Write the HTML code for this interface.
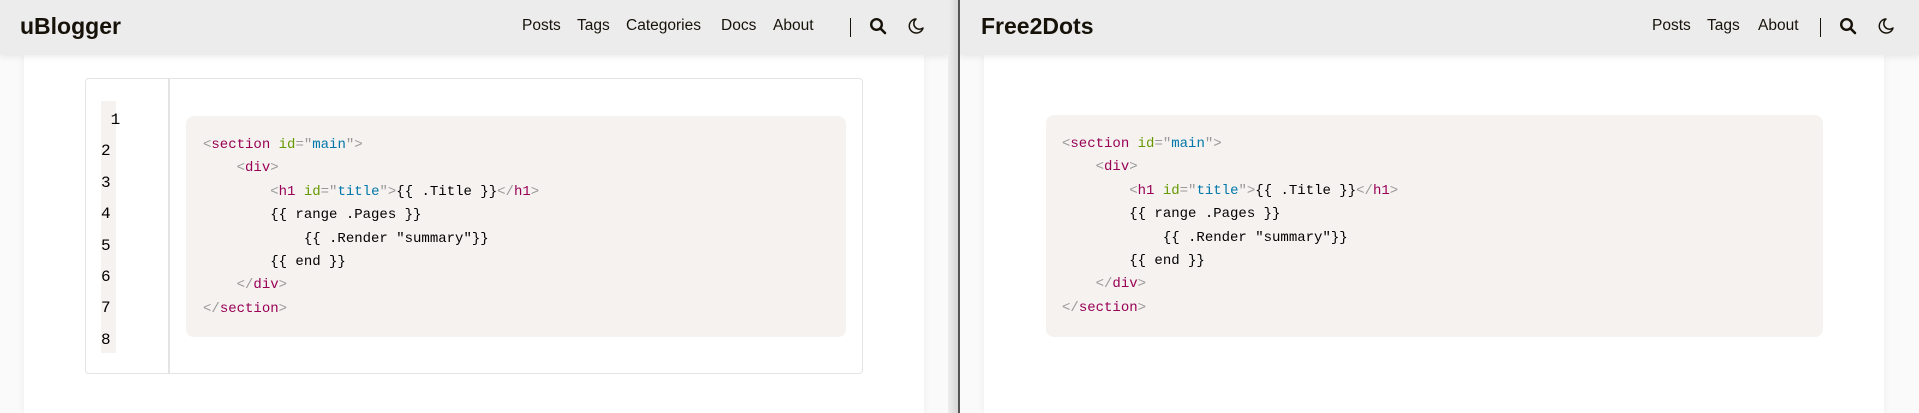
<!DOCTYPE html>
<html><head><meta charset="utf-8"><style>
*{margin:0;padding:0;box-sizing:border-box}
body{width:1919px;height:413px;overflow:hidden;background:#fafafa;font-family:"Liberation Sans",sans-serif;position:relative}
.pane{position:absolute;top:0;height:413px;overflow:hidden}
.hdr{position:absolute;top:0;left:0;height:55px;background:#ececec;box-shadow:0 2px 6px rgba(0,0,0,.08)}
.logo{position:absolute;top:13px;font-weight:bold;font-size:23px;color:#161209}
.nav{position:absolute;top:17px;font-size:15.5px;color:#161209}
.card{position:absolute;top:55px;height:358px;background:#fff;box-shadow:0 0 8px rgba(0,0,0,.06)}
.code{position:absolute;background:#f5f2f0;border-radius:8px;font-family:"Liberation Mono",monospace;font-size:14px;line-height:23.4px;color:#000;white-space:pre;padding-top:18px}
.t{color:#905}.a{color:#690}.v{color:#07a}.p{color:#999}
</style></head><body>
<div class="pane" style="left:0;width:958px">
 <div class="card" style="left:24px;width:900px"></div>
 <div class="hdr" style="width:948px"></div>
 <div class="logo" style="left:20px">uBlogger</div>
 <div class="nav" style="left:522px">Posts</div>
 <div class="nav" style="left:577px">Tags</div>
 <div class="nav" style="left:626px">Categories</div>
 <div class="nav" style="left:721px">Docs</div>
 <div class="nav" style="left:773px">About</div>
 <div style="position:absolute;left:850px;top:18px;width:1px;height:19px;background:#161209"></div>
 <svg style="position:absolute;left:869px;top:17px" width="18" height="18" viewBox="0 0 18 18"><circle cx="7.5" cy="7.5" r="5.3" fill="none" stroke="#161209" stroke-width="2.4"/><path d="M11.5 11.5L16 16" stroke="#161209" stroke-width="2.6" stroke-linecap="round"/></svg>
 <svg style="position:absolute;left:907px;top:17px" width="18" height="18" viewBox="0 0 18 18"><path d="M9 2A7 7 0 1 0 16 11A5.5 5.5 0 0 1 9 2Z" fill="none" stroke="#161209" stroke-width="1.5" stroke-linejoin="round"/></svg>
 <div style="position:absolute;left:85px;top:78px;width:778px;height:296px;border:1px solid #e4e4e4;border-radius:4px"></div>
 <div style="position:absolute;left:168px;top:79px;width:2px;height:294px;background:#e4e4e4"></div>
 <div style="position:absolute;left:101px;top:101px;width:15px;height:252px;background:#f5f2f0"></div>
 <div style="position:absolute;left:101px;top:105px;font-family:'Liberation Mono',monospace;font-size:16px;line-height:31.4px;color:#000;white-space:pre"> 1
2
3
4
5
6
7
8</div>
 <div class="code" style="left:186px;top:116px;width:660px;height:221px;padding-left:17px"><span class="p">&lt;</span><span class="t">section</span> <span class="a">id</span><span class="p">="</span><span class="v">main</span><span class="p">"&gt;</span>
    <span class="p">&lt;</span><span class="t">div</span><span class="p">&gt;</span>
        <span class="p">&lt;</span><span class="t">h1</span> <span class="a">id</span><span class="p">="</span><span class="v">title</span><span class="p">"&gt;</span>{{ .Title }}<span class="p">&lt;/</span><span class="t">h1</span><span class="p">&gt;</span>
        {{ range .Pages }}
            {{ .Render "summary"}}
        {{ end }}
    <span class="p">&lt;/</span><span class="t">div</span><span class="p">&gt;</span>
<span class="p">&lt;/</span><span class="t">section</span><span class="p">&gt;</span></div>
</div>
<div style="position:absolute;left:948px;top:0;width:10px;height:413px;background:linear-gradient(90deg,#eee,#d6d6d6)"></div>
<div style="position:absolute;left:958px;top:0;width:2px;height:413px;background:#555"></div>
<div class="pane" style="left:960px;width:959px">
 <div class="card" style="left:24px;width:900px"></div>
 <div class="hdr" style="width:959px"></div>
 <div class="logo" style="left:21px">Free2Dots</div>
 <div class="nav" style="left:692px">Posts</div>
 <div class="nav" style="left:747px">Tags</div>
 <div class="nav" style="left:798px">About</div>
 <div style="position:absolute;left:860px;top:18px;width:1px;height:19px;background:#161209"></div>
 <svg style="position:absolute;left:879px;top:17px" width="18" height="18" viewBox="0 0 18 18"><circle cx="7.5" cy="7.5" r="5.3" fill="none" stroke="#161209" stroke-width="2.4"/><path d="M11.5 11.5L16 16" stroke="#161209" stroke-width="2.6" stroke-linecap="round"/></svg>
 <div style="position:absolute;left:917px;top:17px"><svg width="18" height="18" viewBox="0 0 18 18"><path d="M9 2A7 7 0 1 0 16 11A5.5 5.5 0 0 1 9 2Z" fill="none" stroke="#161209" stroke-width="1.5" stroke-linejoin="round"/></svg></div>
 <div class="code" style="left:86px;top:115px;width:777px;height:222px;padding-left:16px"><span class="p">&lt;</span><span class="t">section</span> <span class="a">id</span><span class="p">="</span><span class="v">main</span><span class="p">"&gt;</span>
    <span class="p">&lt;</span><span class="t">div</span><span class="p">&gt;</span>
        <span class="p">&lt;</span><span class="t">h1</span> <span class="a">id</span><span class="p">="</span><span class="v">title</span><span class="p">"&gt;</span>{{ .Title }}<span class="p">&lt;/</span><span class="t">h1</span><span class="p">&gt;</span>
        {{ range .Pages }}
            {{ .Render "summary"}}
        {{ end }}
    <span class="p">&lt;/</span><span class="t">div</span><span class="p">&gt;</span>
<span class="p">&lt;/</span><span class="t">section</span><span class="p">&gt;</span></div>
</div>
</body></html>
